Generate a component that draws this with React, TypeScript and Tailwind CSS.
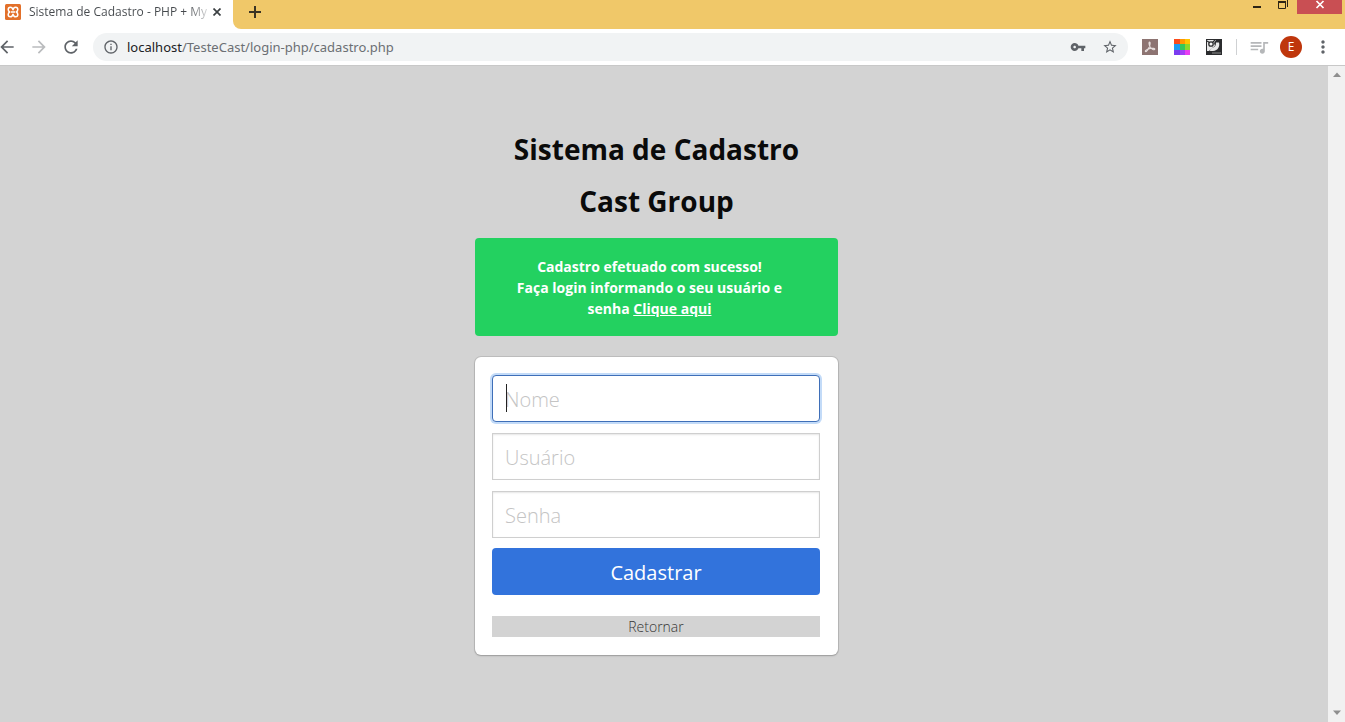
import React from 'react';

function TabStrip() {
  return (
    <div className="flex h-[29px] items-stretch bg-[#f0c869]">
      <div className="flex w-[233px] shrink-0 items-start bg-white pl-[5px] pt-1">
        <svg className="h-4 w-4 shrink-0" viewBox="0 0 16 16" aria-hidden="true">
          <rect width="16" height="16" rx="1.5" fill="#e2702a" />
          <path
            d="M8 5.800C7.500 3.800 6.600 3.300 5.400 3.300 3.900 3.300 3.200 4.200 3.200 5.600 3.200 7 3.800 7.600 4.800 8 3.800 8.400 3.200 9 3.200 10.400c0 1.400.7 2.300 2.200 2.300 1.200 0 2.100-.5 2.600-2.500.5 2 1.400 2.500 2.600 2.500 1.500 0 2.200-.9 2.200-2.300 0-1.400-.6-2-1.600-2.400 1-.4 1.600-1 1.600-2.400 0-1.400-.7-2.300-2.200-2.300C9.400 3.300 8.500 3.800 8 5.800zM6 8h4"
            fill="none"
            stroke="#fff"
            strokeWidth="1.500"
            strokeLinejoin="round"
          />
        </svg>
        <div className="ml-2 w-[180px] whitespace-nowrap bg-[linear-gradient(90deg,#45494d_88%,#ffffff_102%)] bg-clip-text text-[12px] leading-4 text-transparent">
          Sistema de Cadastro - PHP + My
        </div>
        <button type="button" aria-label="Fechar guia" className="flex h-4 w-4 shrink-0 items-center justify-center">
          <svg className="h-2 w-2" viewBox="0 0 8 8" aria-hidden="true">
            <path d="M.5.5l7 7M7.5.5l-7 7" stroke="#3c4043" strokeWidth="1.7" />
          </svg>
        </button>
      </div>
      <div className="flex flex-1 items-stretch bg-white">
        <div className="flex flex-1 items-start justify-between rounded-bl-lg bg-[#f0c869]">
          <button type="button" aria-label="Nova guia" className="ml-4 mt-1.5 flex h-3 w-3 items-center justify-center">
            <svg className="h-3 w-3" viewBox="0 0 12 12" aria-hidden="true">
              <path d="M6 0v12M0 6h12" stroke="#3b3423" strokeWidth="2" />
            </svg>
          </button>
          <div className="flex items-start pr-[3px]">
            <button type="button" aria-label="Minimizar" className="h-3.5 w-6">
              <svg className="h-3.5 w-6" viewBox="0 0 24 14" aria-hidden="true">
                <path d="M8 7h8" stroke="#2c2415" strokeWidth="2" />
              </svg>
            </button>
            <button type="button" aria-label="Restaurar" className="h-3.5 w-7">
              <svg className="h-3.5 w-7" viewBox="0 0 28 14" aria-hidden="true">
                <path d="M9.500 1.500h7v7h-7zM18.500 0v7" fill="none" stroke="#2c2415" strokeWidth="1" />
                <path d="M9 2h8" stroke="#2c2415" strokeWidth="2" />
              </svg>
            </button>
            <button type="button" aria-label="Fechar" className="h-3.5 w-[45px] bg-[#c94f53]">
              <svg className="h-3.5 w-[45px]" viewBox="0 0 45 14" aria-hidden="true">
                <path d="M19.5 1l7 7M26.5 1l-7 7" stroke="#fff" strokeWidth="1.7" />
              </svg>
            </button>
          </div>
        </div>
      </div>
    </div>
  );
}

const ARROW_BACK = 'M20 11H7.83l5.59-5.59L12 4l-8 8 8 8 1.41-1.41L7.83 13H20v-2z';
const ARROW_FORWARD = 'M12 4l-1.41 1.41L16.17 11H4v2h12.17l-5.58 5.59L12 20l8-8z';
const REFRESH =
  'M17.65 6.35C16.2 4.9 14.21 4 12 4c-4.42 0-7.99 3.58-7.99 8s3.57 8 7.99 8c3.73 0 6.84-2.55 7.73-6h-2.08c-.82 2.33-3.04 4-5.65 4-3.31 0-6-2.69-6-6s2.69-6 6-6c1.66 0 3.14.69 4.22 1.78L13 11h7V4l-2.35 2.35z';
const INFO =
  'M11 7h2v2h-2zm0 4h2v6h-2zm1-9C6.48 2 2 6.48 2 12s4.48 10 10 10 10-4.48 10-10S17.52 2 12 2zm0 18c-4.41 0-8-3.59-8-8s3.59-8 8-8 8 3.59 8 8-3.59 8-8 8z';
const KEY =
  'M12.65 10C11.83 7.67 9.61 6 7 6c-3.31 0-6 2.69-6 6s2.69 6 6 6c2.61 0 4.83-1.67 5.65-4H17v4h4v-4h2v-4H12.65zM7 14c-1.1 0-2-.9-2-2s.9-2 2-2 2 .9 2 2-.9 2-2 2z';
const STAR =
  'M22 9.24l-7.19-.62L12 2 9.19 8.63 2 9.24l5.46 4.73L5.82 21 12 17.27 18.18 21l-1.63-7.03L22 9.24zM12 15.4l-3.76 2.27 1-4.28-3.32-2.88 4.38-.38L12 6.1l1.71 4.04 4.38.38-3.32 2.88 1 4.28L12 15.4z';
const QUEUE =
  'M15 6H2v2h13V6zm0 4H2v2h13v-2zM2 16h9v-2H2v2zM17 6v8.18c-.31-.11-.65-.18-1-.18-1.66 0-3 1.34-3 3s1.34 3 3 3 3-1.34 3-3V8h4V6h-6z';
const MORE =
  'M12 8c1.1 0 2-.9 2-2s-.9-2-2-2-2 .9-2 2 .9 2 2 2zm0 2c-1.1 0-2 .9-2 2s.9 2 2 2 2-.9 2-2-.9-2-2-2zm0 6c-1.1 0-2 .9-2 2s.9 2 2 2 2-.9 2-2-.9-2-2-2z';

function Glyph({ path, className }: { path: string; className: string }) {
  return (
    <svg viewBox="0 0 24 24" fill="currentColor" className={className} aria-hidden="true">
      <path d={path} />
    </svg>
  );
}

function Toolbar() {
  return (
    <div className="flex h-[37px] items-center border-b border-[#c8c8c8] bg-white pr-3 text-[#5f6368]">
      <div className="flex items-center gap-3">
        <button type="button" aria-label="Voltar" className="-ml-[3px]">
          <Glyph path={ARROW_BACK} className="h-5 w-5" />
        </button>
        <button type="button" aria-label="Avançar" className="text-[#babcbe]">
          <Glyph path={ARROW_FORWARD} className="h-5 w-5" />
        </button>
        <button type="button" aria-label="Recarregar">
          <Glyph path={REFRESH} className="h-5 w-5" />
        </button>
      </div>
      <div className="ml-3 flex h-7 flex-1 items-center rounded-full bg-[#f1f3f4] pl-2.5 pr-2.5">
        <Glyph path={INFO} className="h-4 w-4 shrink-0" />
        <div className="ml-2 flex-1 whitespace-nowrap pt-px font-['Noto_Sans',sans-serif] text-[13px] text-[#6b6f73]">
          <span className="text-[#202124]">localhost</span>/TesteCast/login-php/cadastro.php
        </div>
        <button type="button" aria-label="Senhas">
          <Glyph path={KEY} className="h-4 w-4" />
        </button>
        <button type="button" aria-label="Favoritos" className="ml-4">
          <Glyph path={STAR} className="h-4 w-4" />
        </button>
      </div>
      <div className="ml-3.5 flex items-center gap-4">
        <svg className="h-4 w-4" viewBox="0 0 16 16" aria-hidden="true">
          <rect width="16" height="16" fill="#8d7472" />
          <path d="M7.5 3c1 0 .8 3-.4 5.200C6 10.600 4.500 13 3.500 12.600c-1-.8 2-2.800 5-3.200 2.500-.4 4.600 0 4.300 1-.4 1-3-.2-4.500-2C7 6.500 6.600 3 7.500 3z" fill="none" stroke="#e6dedd" strokeWidth="1.100" />
        </svg>
        <svg className="h-4 w-4" viewBox="0 0 16 16" aria-hidden="true">
          <path d="M0 0h6v5H0z" fill="#fb4b1c" />
          <path d="M6 0h5v5H6z" fill="#ff9800" />
          <path d="M11 0h5v5h-5z" fill="#ffc400" />
          <path d="M0 5h6v6H0z" fill="#1d9bf0" />
          <path d="M6 5h5v6H6z" fill="#35c75a" />
          <path d="M11 5h5v6h-5z" fill="#8bd82b" />
          <path d="M0 11h6v5H0z" fill="#7a3cf0" />
          <path d="M6 11h5v5H6z" fill="#a23df5" />
          <path d="M11 11h5v5h-5z" fill="#e83df0" />
        </svg>
        <svg className="h-4 w-4" viewBox="0 0 16 16" aria-hidden="true">
          <rect width="16" height="16" fill="#2b2c2e" />
          <path d="M1 1h9L8 4l1 3-3 2-3 3H1z" fill="#e9e9e9" />
          <circle cx="5" cy="5" r="2.200" fill="#f4f4f4" stroke="#2b2c2e" strokeWidth="1.300" />
          <path d="M1 2l2.500 1.500M6.500 3.500L9 1" fill="none" stroke="#2b2c2e" strokeWidth="1.200" />
          <path d="M10 3.500h3c1 4-1 8-6 8.500H4c0-2 1-3 3-3.500 2-.5 3-2 3-5z" fill="#e9e9e9" />
          <path d="M6 14h9" stroke="#8d8d8d" strokeWidth="1" />
        </svg>
      </div>
      <div className="ml-3.5 h-4 w-px bg-[#cfd1d3]" />
      <button type="button" aria-label="Fila de mídia" className="ml-3 text-[#b5b7b9]">
        <Glyph path={QUEUE} className="h-5 w-5" />
      </button>
      <button type="button" aria-label="Perfil" className="ml-[11px] flex h-[22px] w-[22px] items-center justify-center rounded-full bg-[#bf360c] text-[12px] text-white">
        E
      </button>
      <button type="button" aria-label="Menu" className="ml-[11px]">
        <Glyph path={MORE} className="h-5 w-5" />
      </button>
    </div>
  );
}

const inputBase =
  'block h-[47px] w-full border bg-white px-3 pt-0.5 text-[20px] font-light text-[#363636] caret-transparent outline-none placeholder:text-[#c4c4c4]';

function RegisterForm() {
  return (
    <form
      className="mt-[21px] rounded-md bg-white px-[17px] py-[18px] pr-[18px] shadow-[0_1px_2px_rgba(10,10,10,0.2),0_0_0_1px_rgba(10,10,10,0.1)]"
      onSubmit={(e: React.FormEvent) => e.preventDefault()}
    >
      <div className="flex flex-col gap-[11px]">
        <div className="relative">
          <input
            type="text"
            aria-label="Nome"
            placeholder="Nome"
            className={inputBase + ' rounded-[4px] border-[#3f6fb8] shadow-[0_0_0_2px_#c3dbf8]'}
          />
          <span className="absolute left-3.5 top-[9px] h-7 w-px bg-[#222]" />
        </div>
        <input
          type="text"
          aria-label="Usuário"
          placeholder="Usuário"
          className={inputBase + ' border-[#cfcfcf] shadow-[inset_0_1px_2px_rgba(10,10,10,0.1)]'}
        />
        <input
          type="password"
          aria-label="Senha"
          placeholder="Senha"
          className={inputBase + ' border-[#cfcfcf] shadow-[inset_0_1px_2px_rgba(10,10,10,0.1)]'}
        />
      </div>
      <button type="submit" className="mt-2.5 block h-[47px] w-full rounded-[4px] bg-[#3273dc] pt-0.5 text-[20px] text-white">
        Cadastrar
      </button>
      <a href="#retornar" className="mt-[21px] block bg-[#d3d3d3] text-center text-[14px] font-light leading-[21px] text-[#363636]">
        Retornar
      </a>
    </form>
  );
}

export default function App() {
  return (
    <div className="flex min-h-screen flex-col font-['Open_Sans','Noto_Sans',sans-serif]">
      <header>
        <TabStrip />
        <Toolbar />
      </header>
      <div className="flex flex-1 bg-[#d3d3d3]">
        <main className="flex flex-1 flex-col items-center pr-[15px] pt-[62px]">
          <div className="w-full max-w-[363px] text-center">
            <h1 className="text-[28px] font-bold leading-[42px] text-[#0a0a0a]">Sistema de Cadastro</h1>
            <h2 className="mt-2.5 text-[28px] font-bold leading-[42px] text-[#0a0a0a]">Cast Group</h2>
            <div className="mt-4 rounded-[4px] bg-[#23d160] pb-[17px] pl-[21px] pr-[35px] pt-[18px] text-[14px] font-bold leading-[21px] text-white">
              <p>Cadastro efetuado com sucesso!</p>
              <p>
                Faça login informando o seu usuário e senha{' '}
                <a href="#login" className="underline">
                  Clique aqui
                </a>
              </p>
            </div>
            <RegisterForm />
          </div>
        </main>
        <div className="flex w-[17px] flex-col items-center justify-between bg-[#f1f1f1] py-[5px]" aria-hidden="true">
          <svg className="h-2 w-2" viewBox="0 0 8 8">
            <path d="M4 1.500L8 6H0z" fill="#8f8f8f" />
          </svg>
          <svg className="h-2 w-2" viewBox="0 0 8 8">
            <path d="M4 6L8 1.500H0z" fill="#8f8f8f" />
          </svg>
        </div>
      </div>
    </div>
  );
}
